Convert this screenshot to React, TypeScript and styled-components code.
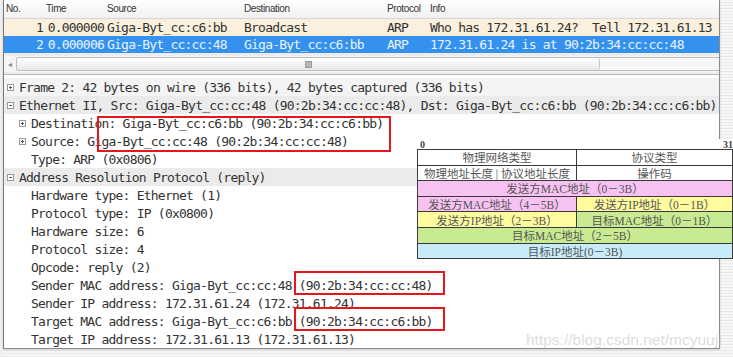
import React from "react";
import styled, { createGlobalStyle } from "styled-components";

const GlobalStyle = createGlobalStyle`
  html, body {
    margin: 0;
    padding: 0;
    background: #f2f2f2;
  }
`;

const MONO = `"DejaVu Sans Mono", "Liberation Mono", monospace`;

interface PacketRow {
  no: string;
  time: string;
  source: string;
  destination: string;
  protocol: string;
  info: string;
}

const packets: PacketRow[] = [
  {
    no: "1",
    time: "0.000000",
    source: "Giga-Byt_cc:c6:bb",
    destination: "Broadcast",
    protocol: "ARP",
    info: "Who has 172.31.61.24?  Tell 172.31.61.13",
  },
  {
    no: "2",
    time: "0.000006",
    source: "Giga-Byt_cc:cc:48",
    destination: "Giga-Byt_cc:c6:bb",
    protocol: "ARP",
    info: "172.31.61.24 is at 90:2b:34:cc:cc:48",
  },
];

interface TreeLine {
  text: string;
  level: 0 | 1;
  expander?: "+" | "-";
  shade?: "light" | "dark";
}

const tree: TreeLine[] = [
  { text: "Frame 2: 42 bytes on wire (336 bits), 42 bytes captured (336 bits)", level: 0, expander: "+", shade: "light" },
  { text: "Ethernet II, Src: Giga-Byt_cc:cc:48 (90:2b:34:cc:cc:48), Dst: Giga-Byt_cc:c6:bb (90:2b:34:cc:c6:bb)", level: 0, expander: "-", shade: "dark" },
  { text: "Destination: Giga-Byt_cc:c6:bb (90:2b:34:cc:c6:bb)", level: 1, expander: "+" },
  { text: "Source: Giga-Byt_cc:cc:48 (90:2b:34:cc:cc:48)", level: 1, expander: "+" },
  { text: "Type: ARP (0x0806)", level: 1 },
  { text: "Address Resolution Protocol (reply)", level: 0, expander: "-", shade: "dark" },
  { text: "Hardware type: Ethernet (1)", level: 1 },
  { text: "Protocol type: IP (0x0800)", level: 1 },
  { text: "Hardware size: 6", level: 1 },
  { text: "Protocol size: 4", level: 1 },
  { text: "Opcode: reply (2)", level: 1 },
  { text: "Sender MAC address: Giga-Byt_cc:cc:48 (90:2b:34:cc:cc:48)", level: 1 },
  { text: "Sender IP address: 172.31.61.24 (172.31.61.24)", level: 1 },
  { text: "Target MAC address: Giga-Byt_cc:c6:bb (90:2b:34:cc:c6:bb)", level: 1 },
  { text: "Target IP address: 172.31.61.13 (172.31.61.13)", level: 1 },
];

type CellColor = "white" | "pink" | "yellow" | "green" | "blue";

interface FieldCell {
  text: string;
  span: 1 | 2;
  color: CellColor;
}

const fields: FieldCell[] = [
  { text: "物理网络类型", span: 1, color: "white" },
  { text: "协议类型", span: 1, color: "white" },
  { text: "物理地址长度 | 协议地址长度", span: 1, color: "white" },
  { text: "操作码", span: 1, color: "white" },
  { text: "发送方MAC地址（0－3B）", span: 2, color: "pink" },
  { text: "发送方MAC地址（4－5B）", span: 1, color: "pink" },
  { text: "发送方IP地址（0－1B）", span: 1, color: "yellow" },
  { text: "发送方IP地址（2－3B）", span: 1, color: "yellow" },
  { text: "目标MAC地址（0－1B）", span: 1, color: "green" },
  { text: "目标MAC地址（2－5B）", span: 2, color: "green" },
  { text: "目标IP地址(0－3B)", span: 2, color: "blue" },
];

const cellBg: Record<CellColor, string> = {
  white: "#ffffff",
  pink: "#f6c2f2",
  yellow: "#fdfb9e",
  green: "#c8ea92",
  blue: "#c8ebf9",
};

const Expander = ({ sign }: { sign?: "+" | "-" }) => (
  <ExpBox $hidden={!sign}>
    {sign && (
      <svg width="7" height="7" viewBox="0 0 7 7">
        <rect x="0.5" y="0.5" width="6" height="6" fill="#fff" stroke="#9a9a9a" />
        <line x1="2" y1="3.5" x2="5" y2="3.5" stroke="#555" />
        {sign === "+" && <line x1="3.5" y1="2" x2="3.5" y2="5" stroke="#555" />}
      </svg>
    )}
  </ExpBox>
);

export default function App() {
  return (
    <>
      <GlobalStyle />
      <Window>
        <Gutter />
        <Main>
          <PacketList>
            <HeaderRow>
              <HeadCell>No.</HeadCell>
              <HeadCell>Time</HeadCell>
              <HeadCell>Source</HeadCell>
              <HeadCell>Destination</HeadCell>
              <HeadCell>Protocol</HeadCell>
              <HeadCell>Info</HeadCell>
            </HeaderRow>
            {packets.map((p, i) => (
              <Row key={p.no} $selected={i === 1}>
                <Cell $right>{p.no}</Cell>
                <Cell $right>{p.time}</Cell>
                <Cell>{p.source}</Cell>
                <Cell>{p.destination}</Cell>
                <Cell>{p.protocol}</Cell>
                <Cell>{p.info}</Cell>
              </Row>
            ))}
          </PacketList>
          <ScrollBar>
            <ArrowLeft>◂</ArrowLeft>
            <Track>
              <Thumb>
                <Grip />
              </Thumb>
            </Track>
          </ScrollBar>
          <Details>
            {tree.map((line, i) => (
              <TreeRow key={i} $level={line.level} $shade={line.shade}>
                <Expander sign={line.expander} />
                <TreeText>{line.text}</TreeText>
              </TreeRow>
            ))}
          </Details>
        </Main>
        <RightGutter />

        <Highlight style={{ left: 97, top: 116, width: 294, height: 36 }} />
        <Highlight style={{ left: 294, top: 271, width: 151, height: 24 }} />
        <Highlight style={{ left: 294, top: 307, width: 151, height: 24 }} />

        <Diagram>
          <BitLabels>
            <span>0</span>
            <span>31</span>
          </BitLabels>
          <FieldGrid>
            {fields.map((f, i) => (
              <Field key={i} $span={f.span} $color={f.color}>
                {f.text}
              </Field>
            ))}
          </FieldGrid>
        </Diagram>

        <Watermark>https://blog.csdn.net/mcyuuji</Watermark>
      </Window>
    </>
  );
}

const Window = styled.div`
  position: relative;
  display: flex;
  width: 733px;
  height: 357px;
  overflow: hidden;
  background: repeating-linear-gradient(
    to bottom,
    #f6f6f6 0px,
    #f6f6f6 2px,
    #e9e9e9 2px,
    #e9e9e9 3px
  );
`;

const Gutter = styled.div`
  width: 3px;
  flex-shrink: 0;
  background: #efefef;
`;

const RightGutter = styled.div`
  flex: 1;
`;

const Main = styled.div`
  display: flex;
  flex-direction: column;
  width: 717px;
  height: 349px;
  flex-shrink: 0;
  box-sizing: border-box;
  border-left: 1px solid #7a7a7a;
  border-right: 1px solid #8a8a8a;
  border-bottom: 1px solid #8a8a8a;
  background: #ededed;
  box-shadow: 0 1px 2px rgba(0, 0, 0, 0.15);
`;

const PacketList = styled.div`
  display: flex;
  flex-direction: column;
  background: #fff;
`;

const COLS = "40px 61px 137px 143px 43px 1fr";

const HeaderRow = styled.div`
  display: grid;
  grid-template-columns: ${COLS};
  height: 19px;
  box-sizing: border-box;
  border-bottom: 1px solid #d6d6d6;
  background: linear-gradient(#ffffff, #f1f1f1);
`;

const HeadCell = styled.div`
  padding-left: 2px;
  font-family: "Liberation Sans", Arial, sans-serif;
  font-size: 10px;
  letter-spacing: -0.4px;
  line-height: 18px;
  color: #333;
  white-space: nowrap;
`;

const Row = styled.div<{ $selected?: boolean }>`
  display: grid;
  grid-template-columns: ${COLS};
  height: 17px;
  background: ${(p) => (p.$selected ? "#3492ee" : "#fbf0dd")};
  color: ${(p) => (p.$selected ? "#eaf3ff" : "#333")};
`;

const Cell = styled.div<{ $right?: boolean }>`
  font-family: ${MONO};
  font-size: 13px;
  letter-spacing: -0.78px;
  line-height: 17px;
  white-space: pre;
  overflow: hidden;
  text-align: ${(p) => (p.$right ? "right" : "left")};
  padding: ${(p) => (p.$right ? "0 1px 0 0" : "0 0 0 2px")};
`;

const ScrollBar = styled.div`
  display: flex;
  align-items: center;
  height: 19px;
  margin-top: 3px;
  background: #f4f4f4;
`;

const ArrowLeft = styled.div`
  width: 12px;
  text-align: center;
  font-size: 8px;
  color: #888;
  font-family: "DejaVu Sans", sans-serif;
`;

const Track = styled.div`
  flex: 1;
  height: 14px;
  box-sizing: border-box;
  border: 1px solid #bdbdbd;
  border-right: none;
  border-radius: 3px 0 0 3px;
  background: #f7f7f7;
  display: flex;
`;

const Thumb = styled.div`
  width: 582px;
  height: 100%;
  display: flex;
  align-items: center;
  justify-content: center;
  background: linear-gradient(#ffffff, #e9e9e9);
  border-right: 1px solid #c6c6c6;
  border-radius: 3px;
`;

const Grip = styled.div`
  width: 5px;
  height: 5px;
  background: #b5b5b5;
  border: 1px solid #9d9d9d;
`;

const Details = styled.div`
  flex: 1;
  margin-top: 2px;
  padding-top: 3px;
  border-top: 1px solid #b8b8b8;
  background: #fff;
  display: flex;
  flex-direction: column;
`;

const TreeRow = styled.div<{ $level: 0 | 1; $shade?: "light" | "dark" }>`
  display: flex;
  align-items: center;
  gap: 5px;
  height: 18px;
  flex-shrink: 0;
  padding-left: ${(p) => (p.$level === 0 ? 3 : 15)}px;
  background: ${(p) =>
    p.$shade === "dark" ? "#ebebeb" : p.$shade === "light" ? "#f4f4f4" : "transparent"};
`;

const ExpBox = styled.div<{ $hidden?: boolean }>`
  width: 7px;
  height: 7px;
  flex-shrink: 0;
  display: flex;
  visibility: ${(p) => (p.$hidden ? "hidden" : "visible")};
`;

const TreeText = styled.span`
  font-family: ${MONO};
  font-size: 13px;
  letter-spacing: -0.78px;
  color: #333;
  white-space: pre;
`;

const Highlight = styled.div`
  position: absolute;
  box-sizing: border-box;
  border: 2px solid #e3171c;
  pointer-events: none;
`;

const Diagram = styled.div`
  position: absolute;
  left: 417px;
  top: 139px;
  width: 316px;
  background: #fff;
  display: flex;
  flex-direction: column;
`;

const BitLabels = styled.div`
  display: flex;
  justify-content: space-between;
  height: 10px;
  padding: 0 0 0 3px;
  font-family: "Liberation Serif", serif;
  font-weight: bold;
  font-size: 10px;
  line-height: 11px;
  color: #444;
`;

const FieldGrid = styled.div`
  display: grid;
  grid-template-columns: 159px 1fr;
  grid-auto-rows: 15.6px;
  border-top: 1px solid #3a3a3a;
  border-left: 1px solid #3a3a3a;
`;

const Field = styled.div<{ $span: 1 | 2; $color: CellColor }>`
  grid-column: span ${(p) => p.$span};
  display: flex;
  align-items: center;
  justify-content: center;
  box-sizing: border-box;
  border-right: 1px solid #3a3a3a;
  border-bottom: 1px solid #3a3a3a;
  background: ${(p) => cellBg[p.$color]};
  font-family: "Liberation Serif", "Noto Sans CJK SC", serif;
  font-size: 11.5px;
  color: #555;
  white-space: nowrap;
`;

const Watermark = styled.div`
  position: absolute;
  left: 526px;
  top: 331px;
  font-family: "Liberation Sans", Arial, sans-serif;
  font-size: 15.5px;
  color: rgba(190, 190, 190, 0.55);
  white-space: nowrap;
  pointer-events: none;
`;
